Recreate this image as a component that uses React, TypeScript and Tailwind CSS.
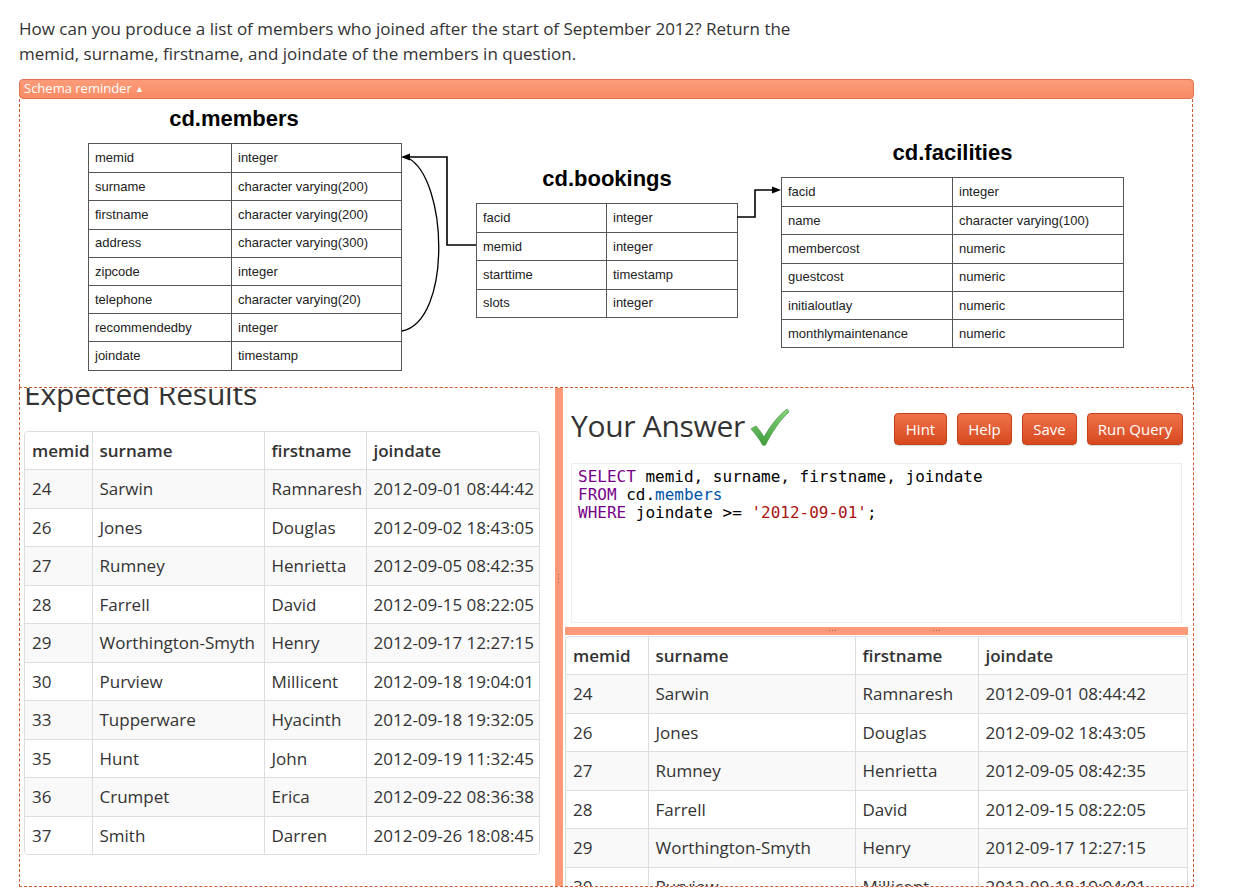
import React from "react";

type Row = [string, string, string, string];

const rows: Row[] = [
  ["24", "Sarwin", "Ramnaresh", "2012-09-01 08:44:42"],
  ["26", "Jones", "Douglas", "2012-09-02 18:43:05"],
  ["27", "Rumney", "Henrietta", "2012-09-05 08:42:35"],
  ["28", "Farrell", "David", "2012-09-15 08:22:05"],
  ["29", "Worthington-Smyth", "Henry", "2012-09-17 12:27:15"],
  ["30", "Purview", "Millicent", "2012-09-18 19:04:01"],
  ["33", "Tupperware", "Hyacinth", "2012-09-18 19:32:05"],
  ["35", "Hunt", "John", "2012-09-19 11:32:45"],
  ["36", "Crumpet", "Erica", "2012-09-22 08:36:38"],
  ["37", "Smith", "Darren", "2012-09-26 18:08:45"],
];

const headers = ["memid", "surname", "firstname", "joindate"];

function ResultTable({ widths, width }: { widths: string[]; width: string }) {
  return (
    <div className={`${width} border border-[#dddddd] rounded-[4px] overflow-hidden bg-white`}>
      <table className="w-full table-fixed border-collapse text-[17px] text-[#333]">
        <colgroup>
          {widths.map((w, i) => (
            <col key={i} className={w} />
          ))}
        </colgroup>
        <thead>
          <tr>
            {headers.map((h, i) => (
              <th
                key={h}
                className={`text-left font-semibold px-[7px] py-[8px] leading-[21px] whitespace-nowrap ${
                  i > 0 ? "border-l border-[#dddddd]" : ""
                }`}
              >
                {h}
              </th>
            ))}
          </tr>
        </thead>
        <tbody>
          {rows.map((r, ri) => (
            <tr key={ri} className={ri % 2 === 0 ? "bg-[#f9f9f9]" : "bg-white"}>
              {r.map((c, ci) => (
                <td
                  key={ci}
                  className={`px-[7px] py-[8px] leading-[21.5px] whitespace-nowrap border-t border-[#dddddd] ${
                    ci > 0 ? "border-l" : ""
                  }`}
                >
                  {c}
                </td>
              ))}
            </tr>
          ))}
        </tbody>
      </table>
    </div>
  );
}

function SchemaTable({
  rows,
  col1,
  width,
}: {
  rows: [string, string][];
  col1: string;
  width: string;
}) {
  return (
    <div className={`${width} border border-[#555] bg-white`}>
      {rows.map(([a, b], i) => (
        <div
          key={a}
          className={`flex h-[28.2px] items-center text-[13px] text-[#222] ${
            i > 0 ? "border-t border-[#555]" : ""
          }`}
        >
          <div className={`${col1} h-full flex items-center pl-[6px] border-r border-[#555]`}>{a}</div>
          <div className="flex-1 pl-[6px]">{b}</div>
        </div>
      ))}
    </div>
  );
}

function Check() {
  return (
    <svg width="40" height="40" viewBox="0 0 40 40" className="ml-[5px] mt-[2px]">
      <defs>
        <linearGradient id="ck" x1="0" y1="0" x2="0" y2="1">
          <stop offset="0" stopColor="#86d27a" />
          <stop offset="1" stopColor="#3f9e3c" />
        </linearGradient>
      </defs>
      <path
        d="M1 21 C3 19.5 4.5 18.5 6 18 C9 21 11.5 25 14 29 C20 18 28 8 37 1 C38 2 38.5 3 39 4 C30 12 22 24 15.5 37 C14.5 37.5 13.5 37.5 12.5 37 C9.5 31 5.5 26 1 21 Z"
        fill="url(#ck)"
        stroke="#3a8f36"
        strokeWidth="0.6"
      />
    </svg>
  );
}

function Btn({ label, w }: { label: string; w: string }) {
  return (
    <button
      className={`${w} h-[32px] rounded-[4px] border border-[#c2401a] bg-linear-to-b from-[#ef7149] to-[#d7481c] text-white text-[15px] leading-none shadow-[0_1px_1px_rgba(0,0,0,0.15)]`}
    >
      {label}
    </button>
  );
}

export default function App() {
  const members: [string, string][] = [
    ["memid", "integer"],
    ["surname", "character varying(200)"],
    ["firstname", "character varying(200)"],
    ["address", "character varying(300)"],
    ["zipcode", "integer"],
    ["telephone", "character varying(20)"],
    ["recommendedby", "integer"],
    ["joindate", "timestamp"],
  ];
  const bookings: [string, string][] = [
    ["facid", "integer"],
    ["memid", "integer"],
    ["starttime", "timestamp"],
    ["slots", "integer"],
  ];
  const facilities: [string, string][] = [
    ["facid", "integer"],
    ["name", "character varying(100)"],
    ["membercost", "numeric"],
    ["guestcost", "numeric"],
    ["initialoutlay", "numeric"],
    ["monthlymaintenance", "numeric"],
  ];

  return (
    <div
      className="bg-white min-h-[892px] pt-[16px] pl-[19px] text-[#333]"
      style={{ fontFamily: '"Open Sans", "Noto Sans", sans-serif' }}
    >
      <div className="w-[1175px]">
        <p className="text-[17px] leading-[25px] w-[805px]">
          How can you produce a list of members who joined after the start of September 2012? Return the
          memid, surname, firstname, and joindate of the members in question.
        </p>

        {/* Schema reminder bar */}
        <div className="mt-[13px] h-[20px] rounded-[4px] border border-[#e2734d] bg-linear-to-b from-[#fc9b78] to-[#f98c66] text-white text-[13px] leading-[17px] px-[4px]">
          Schema reminder <span className="text-[9px] align-[1px]">▲</span>
        </div>

        {/* Schema diagram */}
        <div
          className="relative h-[288px] border-l border-r border-dashed border-[#cf5a33] mr-[1px]"
          style={{ fontFamily: '"Liberation Sans", Arial, sans-serif' }}
        >
          <div className="absolute left-[68px] top-[7px]">
            <div className="h-[26px] mb-[11px] pr-[22px] text-center text-[22px] leading-[26px] font-bold text-black">
              cd.members
            </div>
            <SchemaTable rows={members} col1="w-[143px]" width="w-[314px]" />
          </div>
          <div className="absolute left-[456px] top-[67px]">
            <div className="h-[26px] mb-[11px] text-center text-[22px] leading-[26px] font-bold text-black">
              cd.bookings
            </div>
            <SchemaTable rows={bookings} col1="w-[130px]" width="w-[262px]" />
          </div>
          <div className="absolute left-[761px] top-[41px]">
            <div className="h-[26px] mb-[11px] text-center text-[22px] leading-[26px] font-bold text-black">
              cd.facilities
            </div>
            <SchemaTable rows={facilities} col1="w-[171px]" width="w-[343px]" />
          </div>
          <svg className="absolute left-0 top-0" width="1170" height="288" viewBox="0 0 1170 288">
            <path d="M456 146 H427 V58 H388" fill="none" stroke="#000" strokeWidth="1.6" />
            <path d="M382 232 C432 222 428 80 388 59" fill="none" stroke="#000" strokeWidth="1.3" />
            <path d="M381 58 L390 54.5 L390 61.5 Z" fill="#000" />
            <path d="M717 118 H735 V91 H754" fill="none" stroke="#000" strokeWidth="1.6" />
            <path d="M761 91 L752 87.5 L752 94.5 Z" fill="#000" />
          </svg>
        </div>

        {/* Lower section */}
        <div className="flex h-[500px] border border-dashed border-[#cf5a33] overflow-hidden">
          {/* Expected results */}
          <div className="w-[535px] shrink-0 overflow-hidden pl-[4px]">
            <h2 className="-mt-[10px] text-[30px] leading-[32px] font-normal tracking-[-0.2px]">Expected Results</h2>
            <div className="mt-[21px]">
              <ResultTable
                width="w-[516px]"
                widths={["w-[67px]", "w-[172px]", "w-[102px]", "w-[175px]"]}
              />
            </div>
          </div>

          {/* vertical splitter */}
          <div className="w-[8px] shrink-0 bg-[#fd9a78] relative">
            <div className="absolute left-[3px] top-[186px] flex flex-col gap-[3px]">
              <span className="w-[1px] h-[1px] bg-[#b5593a]" />
              <span className="w-[1px] h-[1px] bg-[#b5593a]" />
              <span className="w-[1px] h-[1px] bg-[#b5593a]" />
            </div>
          </div>

          {/* Your answer */}
          <div className="flex-1 overflow-hidden">
            <div className="pl-[8px] pr-[10px] pt-[25px]">
              <div className="flex justify-between h-[32px]">
                <div className="flex items-start -mt-[7px] h-[40px]">
                  <h2 className="text-[30px] leading-[40px] font-normal tracking-[-0.3px]">Your Answer</h2>
                  <Check />
                </div>
                <div className="flex gap-[10px]">
                  <Btn label="Hint" w="w-[53px]" />
                  <Btn label="Help" w="w-[55px]" />
                  <Btn label="Save" w="w-[55px]" />
                  <Btn label="Run Query" w="w-[96px]" />
                </div>
              </div>
              <div
                className="mt-[18px] h-[160px] w-[611px] border border-[#eeeeee] pl-[6px] pt-[4px] text-[16px] leading-[18px] text-black whitespace-pre"
                style={{ fontFamily: '"DejaVu Sans Mono", "Liberation Mono", monospace' }}
              >
                <div>
                  <span className="text-[#770088]">SELECT</span> memid, surname, firstname, joindate
                </div>
                <div>
                  <span className="text-[#770088]">FROM</span> cd.<span className="text-[#0055aa]">members</span>
                </div>
                <div>
                  <span className="text-[#770088]">WHERE</span> joindate &gt;= <span className="text-[#aa1111]">'2012-09-01'</span>;
                </div>
              </div>
            </div>
            {/* horizontal splitter */}
            <div className="ml-[2px] mr-[5px] mt-[4px] h-[8px] bg-[#fd9a78] relative">
              <div className="absolute left-[264px] top-[3px] flex gap-[2px]">
                <span className="w-[1px] h-[1px] bg-[#b5593a]" />
                <span className="w-[1px] h-[1px] bg-[#b5593a]" />
                <span className="w-[1px] h-[1px] bg-[#b5593a]" />
              </div>
              <div className="absolute left-[368px] top-[3px] flex gap-[2px]">
                <span className="w-[1px] h-[1px] bg-[#b5593a]" />
                <span className="w-[1px] h-[1px] bg-[#b5593a]" />
                <span className="w-[1px] h-[1px] bg-[#b5593a]" />
              </div>
            </div>
            <div className="ml-[2px] mt-[1px]">
              <ResultTable
                width="w-[623px]"
                widths={["w-[82px]", "w-[207px]", "w-[123px]", "w-[211px]"]}
              />
            </div>
          </div>
        </div>
      </div>
    </div>
  );
}
